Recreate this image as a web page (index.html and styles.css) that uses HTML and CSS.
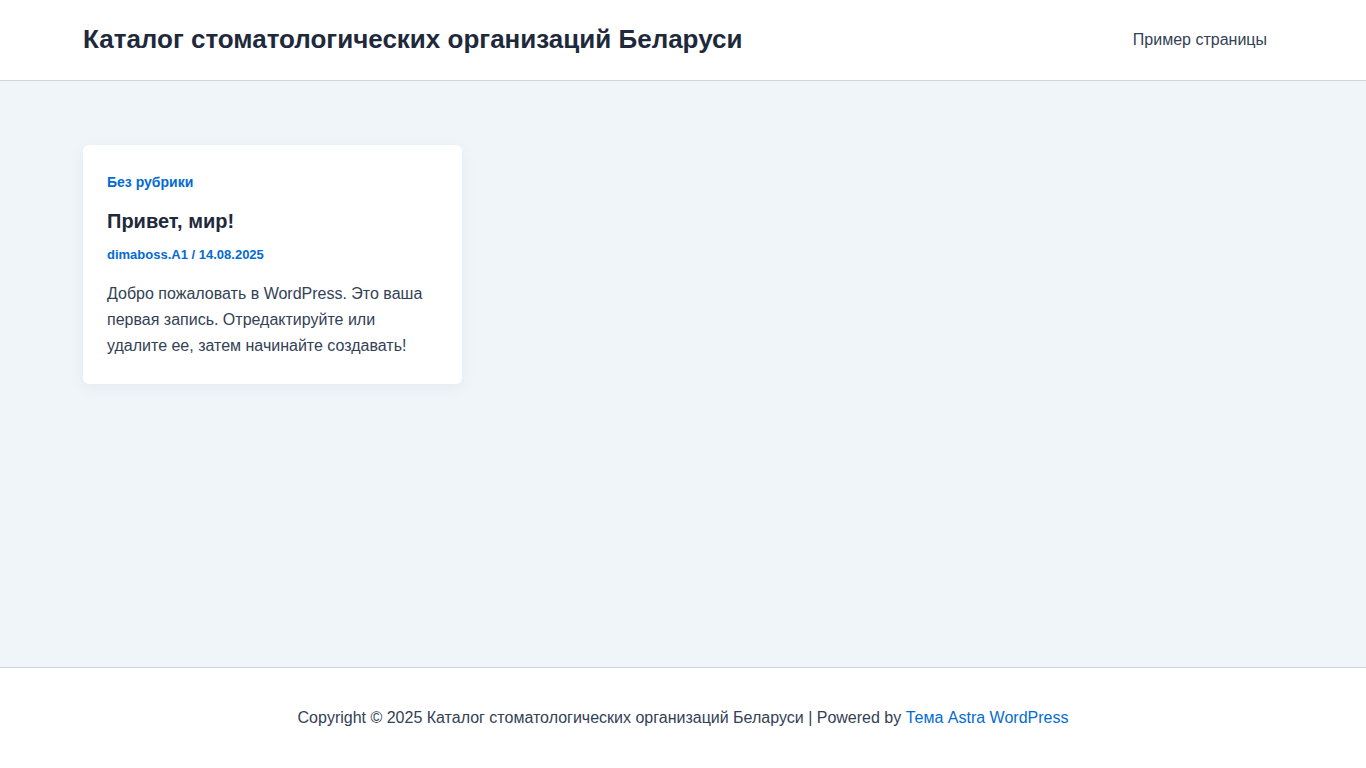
FILE: index.html
```html
<!DOCTYPE html>
<html lang="ru">
<head>
<meta charset="UTF-8">
<meta name="viewport" content="width=device-width, initial-scale=1.0">
<title>Каталог стоматологических организаций Беларуси</title>
<link rel="stylesheet" href="styles.css">
</head>
<body>
    <header class="site-header">
        <div class="container header-inner">
            <a href="#" class="site-title">Каталог стоматологических организаций Беларуси</a>
            <nav class="main-nav">
                <a href="#" class="menu-link">Пример страницы</a>
            </nav>
        </div>
    </header>

    <main class="site-content">
        <div class="container posts-grid">
            <article class="post-card">
                <a href="#" class="post-cat">Без рубрики</a>
                <h2 class="post-title"><a href="#">Привет, мир!</a></h2>
                <div class="post-meta"><a href="#">dimaboss.A1</a> / <span>14.08.2025</span></div>
                <p class="post-excerpt">Добро пожаловать в WordPress. Это ваша первая запись. Отредактируйте или удалите ее, затем начинайте создавать!</p>
            </article>
        </div>
    </main>

    <footer class="site-footer">
        <div class="container footer-inner">
            Copyright © 2025 Каталог стоматологических организаций Беларуси | Powered by <a href="#">Тема Astra WordPress</a>
        </div>
    </footer>
</body>
</html>
```

FILE: styles.css
```css
/* Base */
* {
    box-sizing: border-box;
}

body {
    margin: 0;
    font-family: "Liberation Sans", Arial, sans-serif;
    font-size: 16px;
    color: #334155;
    background-color: #f0f5fa;
    display: flex;
    flex-direction: column;
    min-height: 100vh;
}

a {
    text-decoration: none;
}

.container {
    max-width: 1240px;
    margin: 0 auto;
    padding: 0 20px;
}

/* Header */
.site-header {
    background-color: #fff;
    border-bottom: 1px solid #d1d5db;
}

.header-inner {
    display: flex;
    justify-content: space-between;
    align-items: center;
    height: 80px;
}

.site-title {
    color: #1e293b;
    font-size: 26px;
    font-weight: bold;
    line-height: 1.2;
}

.menu-link {
    display: block;
    color: #334155;
    font-size: 16px;
    padding: 0 16px;
}

/* Posts */
.site-content {
    flex: 1;
    padding-top: 64px;
}

.posts-grid {
    display: grid;
    grid-template-columns: repeat(3, 1fr);
    gap: 32px;
}

.post-card {
    background-color: #fff;
    border-radius: 6px;
    padding: 24px 24px 25px;
    box-shadow: 0 4px 16px rgba(30, 41, 59, 0.05);
}

.post-cat {
    display: block;
    color: #046bd2;
    font-size: 14px;
    font-weight: bold;
    line-height: 26px;
}

.post-title {
    margin: 12px 0 0;
    font-size: 20px;
    line-height: 28px;
}

.post-title a {
    color: #1e293b;
}

.post-meta {
    margin-top: 10px;
    font-size: 13px;
    font-weight: bold;
    line-height: 20px;
    color: #046bd2;
}

.post-meta a {
    color: #046bd2;
}

.post-excerpt {
    margin: 16px 0 0;
    line-height: 26px;
}

/* Footer */
.site-footer {
    background-color: #fff;
    border-top: 1px solid #d1d5db;
    padding: 37px 0;
}

.footer-inner {
    text-align: center;
    line-height: 26px;
}

.footer-inner a {
    color: #046bd2;
}
```
